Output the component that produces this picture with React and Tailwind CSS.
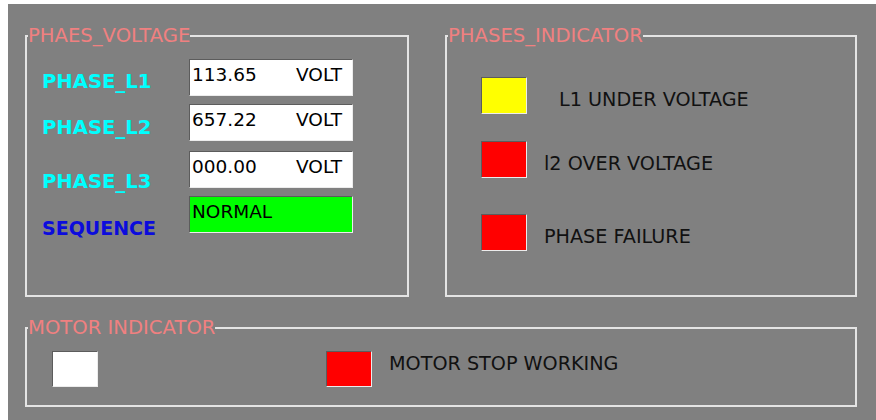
import React from 'react'

const phases = [
  { name: 'PHASE_L1', value: '113.65' },
  { name: 'PHASE_L2', value: '657.22' },
  { name: 'PHASE_L3', value: '000.00' },
]

// spacing between the label rows and the reading rows
const labelGaps = ['mt-[24px]', 'mt-[22px]', 'mt-[30px]', 'mt-[22px]']
const boxGaps = ['mt-[13px]', 'mt-[8px]', 'mt-[10px]', 'mt-[8px]']

const sunken = 'border border-t-[#5c5c5c] border-l-[#5c5c5c] border-b-[#ececec] border-r-[#ececec]'

function Group({ title, className, children }) {
  return (
    <fieldset className={`border-2 border-[#e4e4e4] px-0 ${className}`}>
      <legend className="ml-[1px] px-0 text-[19.6px] leading-[20px] text-[#f08080]">{title}</legend>
      {children}
    </fieldset>
  )
}

function Lamp({ color }) {
  return <div className={`w-[46px] h-[37px] shrink-0 ${sunken} ${color}`} />
}

export default function App() {
  return (
    <div className="w-[876px] h-[420px] bg-white pl-2 pt-1 font-['DejaVu_Sans',sans-serif]">
      <div className="h-full bg-[#808080] pl-[17px] pt-[22px]">
        <div className="flex gap-[36px]">
          <Group title="PHAES_VOLTAGE" className="w-[384px] h-[271px]">
            <div className="flex pl-[15px]">
              <div className="w-[147px] flex flex-col">
                {phases.map((p, i) => (
                  <span key={p.name} className={`${labelGaps[i]} text-[19.6px] leading-[24px] font-bold text-[#00ffff]`}>
                    {p.name}
                  </span>
                ))}
                <span className={`${labelGaps[3]} text-[19px] leading-[24px] font-bold text-[#0c0cdc]`}>SEQUENCE</span>
              </div>
              <div className="flex flex-col">
                {phases.map((p, i) => (
                  <div
                    key={p.name}
                    className={`${boxGaps[i]} w-[164px] h-[37px] bg-white ${sunken} flex items-start pl-[2px] pt-[3px] text-[18.5px] leading-[24px] text-black`}
                  >
                    <span className="w-[104px]">{p.value}</span>
                    <span>VOLT</span>
                  </div>
                ))}
                <div className={`${boxGaps[3]} w-[164px] h-[37px] bg-[#00ff00] ${sunken} pl-[2px] pt-[3px] text-[18.5px] leading-[24px] text-black`}>
                  NORMAL
                </div>
              </div>
            </div>
          </Group>

          <Group title="PHASES_INDICATOR" className="w-[412px] h-[271px]">
            <div className="flex flex-col pl-[34px] text-[19.2px] leading-[24px] text-[#111]">
              <div className="mt-[31px] flex items-start">
                <Lamp color="bg-[#ffff00]" />
                <span className="ml-[32px] mt-[11px]">L1 UNDER VOLTAGE</span>
              </div>
              <div className="mt-[27px] flex items-start">
                <Lamp color="bg-[#ff0000]" />
                <span className="ml-[17px] mt-[11px]">l2 OVER VOLTAGE</span>
              </div>
              <div className="mt-[36px] flex items-start">
                <Lamp color="bg-[#ff0000]" />
                <span className="ml-[17px] mt-[11px]">PHASE FAILURE</span>
              </div>
            </div>
          </Group>
        </div>

        <Group title="MOTOR INDICATOR" className="mt-[21px] w-[832px] h-[89px]">
          <div className="flex items-start pl-[25px] mt-[13px] text-[19.2px] leading-[24px] text-[#111]">
            <div className={`w-[46px] h-[36px] bg-white ${sunken}`} />
            <div className={`ml-[228px] w-[46px] h-[36px] bg-[#ff0000] ${sunken}`} />
            <span className="ml-[17px] mt-[1px]">MOTOR STOP WORKING</span>
          </div>
        </Group>
      </div>
    </div>
  )
}
